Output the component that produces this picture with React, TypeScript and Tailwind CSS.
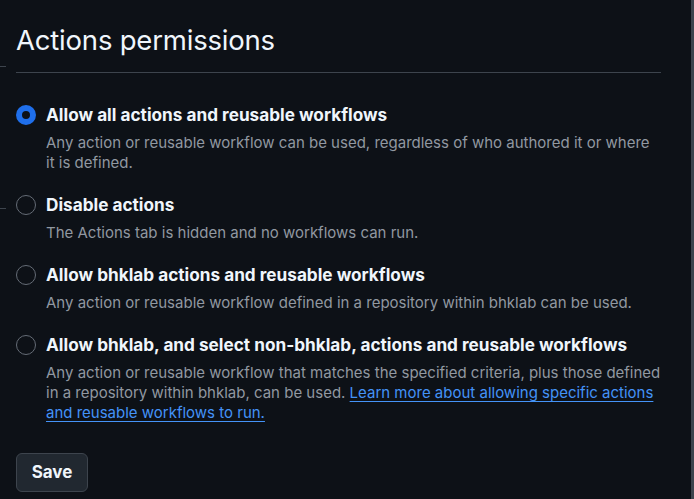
import { useState } from 'react';

type Option = {
  id: string;
  label: string;
  description: React.ReactNode;
};

const options: Option[] = [
  {
    id: 'all',
    label: 'Allow all actions and reusable workflows',
    description: 'Any action or reusable workflow can be used, regardless of who authored it or where it is defined.',
  },
  {
    id: 'disable',
    label: 'Disable actions',
    description: 'The Actions tab is hidden and no workflows can run.',
  },
  {
    id: 'local',
    label: 'Allow bhklab actions and reusable workflows',
    description: 'Any action or reusable workflow defined in a repository within bhklab can be used.',
  },
  {
    id: 'select',
    label: 'Allow bhklab, and select non-bhklab, actions and reusable workflows',
    description: (
      <>
        Any action or reusable workflow that matches the specified criteria, plus those defined in a repository within bhklab, can be used.{' '}
        <a href="#" className="text-[#4493f8] underline decoration-1 underline-offset-[3px]">
          Learn more about allowing specific actions and reusable workflows to run.
        </a>
      </>
    ),
  },
];

function Radio({ checked }: { checked: boolean }) {
  if (checked) {
    return <span className="block h-5 w-5 shrink-0 rounded-full border-[6px] border-[#1f6feb] bg-[#0d1117]" />;
  }
  return <span className="block h-5 w-5 shrink-0 rounded-full border border-[#656c76] bg-[#0d1117]" />;
}

export default function App() {
  const [selected, setSelected] = useState('all');

  return (
    <div className="flex h-[499px] w-[694px] overflow-hidden bg-[#0d1117] font-['Inter',sans-serif] text-[#f0f6fc]">
      <div className="flex w-[6px] shrink-0 flex-col">
        <div className="h-[66px]" />
        <div className="h-px bg-[#3d444d]" />
        <div className="h-[141px]" />
        <div className="h-px bg-[#3d444d]" />
      </div>
      <div className="flex-1 pl-[10px] pr-[30px] pt-[22px]">
        <h2 className="border-b border-[#3d444d] pb-[14px] text-[27.5px] font-normal leading-[36px] tracking-[-0.2px]">
          Actions permissions
        </h2>
        <div className="mt-[30px] flex flex-col gap-[20px]">
          {options.map((opt) => (
            <label key={opt.id} className="flex cursor-pointer gap-[10px]" onClick={() => setSelected(opt.id)}>
              <div className="flex h-6 items-center">
                <Radio checked={selected === opt.id} />
              </div>
              <div className="flex flex-col gap-[6px]">
                <span className="text-[17.2px] font-bold leading-6">{opt.label}</span>
                <p className="text-[15px] leading-5 text-[#9198a1]">{opt.description}</p>
              </div>
            </label>
          ))}
        </div>
        <button className="mt-[30px] h-[39px] w-[72px] rounded-[6px] border border-[#3d444d] bg-[#212830] text-[17px] font-bold text-[#f0f6fc]">
          Save
        </button>
      </div>
      <div className="w-[3px] shrink-0 bg-[#3d444d]" />
    </div>
  );
}
